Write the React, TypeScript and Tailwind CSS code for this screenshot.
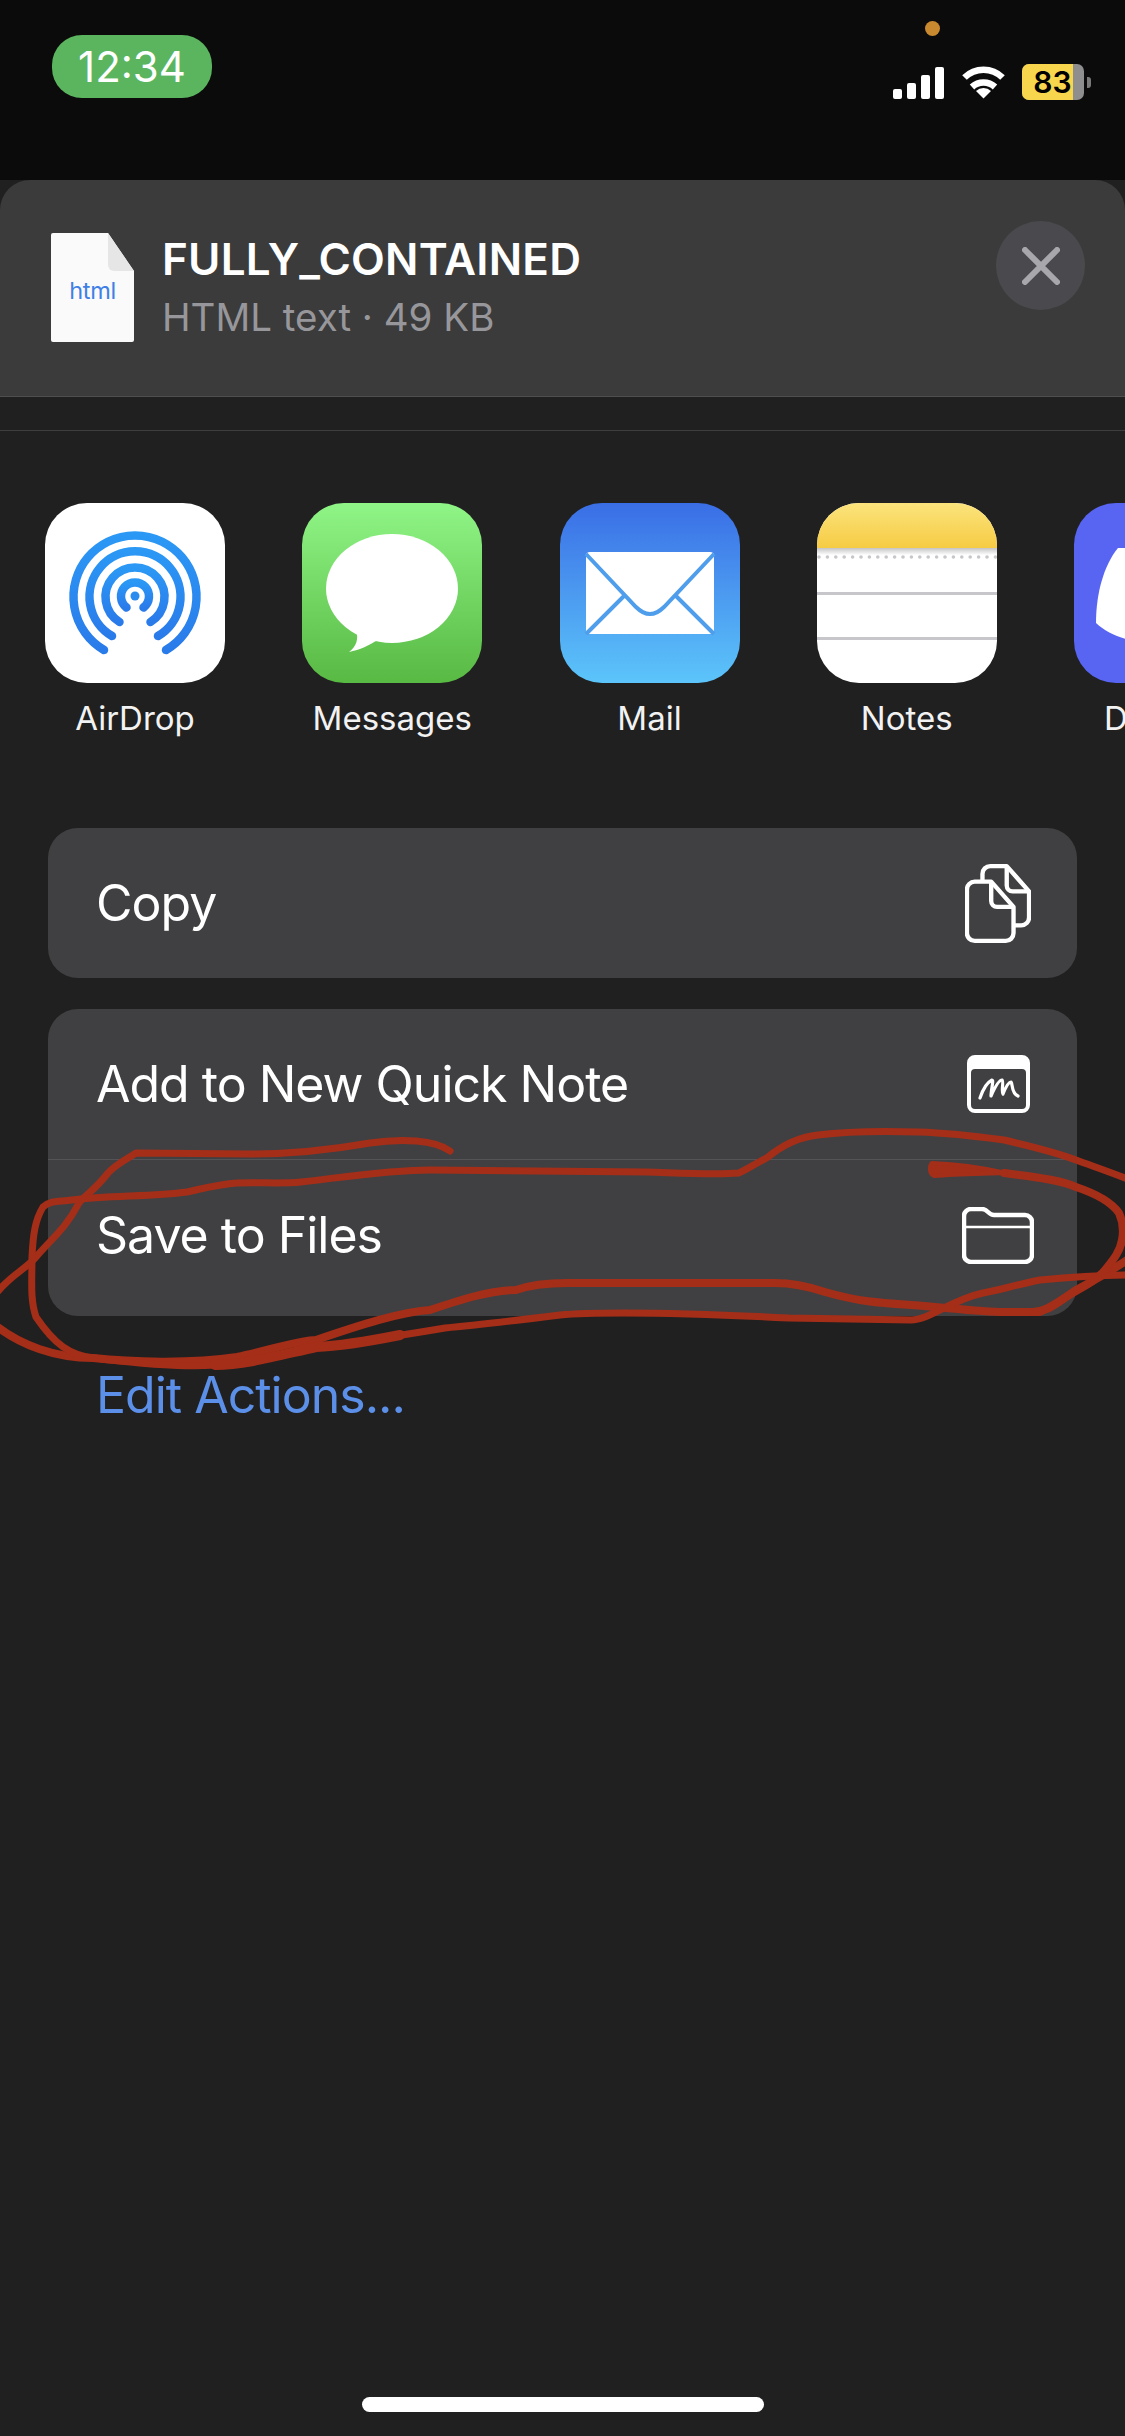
import React from 'react'

const font = { fontFamily: 'Inter, "Noto Sans", sans-serif' }

function StatusBar() {
  return (
    <div className="relative flex h-[180px] shrink-0 items-start justify-between bg-[#0b0b0b] pl-[52px] pr-[34px]">
      <div className="mt-[35px] flex h-[63px] w-[160px] items-center justify-center rounded-[30px] bg-[#5bb55f] text-[42px] text-white">12:34</div>
      <div className="absolute left-[925px] top-[21px] h-[15px] w-[15px] rounded-full bg-[#c98a2f]" />
      <div className="mt-[64px] flex items-center">
        <div className="mr-[17px] flex h-[34px] items-end gap-[5px]">
          <div className="h-[10px] w-[9px] rounded-[2px] bg-white" />
          <div className="h-[16px] w-[9px] rounded-[2px] bg-white" />
          <div className="h-[24px] w-[9px] rounded-[2px] bg-white" />
          <div className="h-[32px] w-[9px] rounded-[2px] bg-white" />
        </div>
        <svg width="45" height="34" viewBox="0 0 45 34" className="mr-[16px]">
          <path d="M3.5 12.5A27 27 0 0 1 41.500 12.500" fill="none" stroke="#fff" strokeWidth="6.500" />
          <path d="M11 22A17 17 0 0 1 34 22" fill="none" stroke="#fff" strokeWidth="6.500" />
          <path d="M22.500 33.500L15 26A11 11 0 0 1 30 26Z" fill="#fff" />
        </svg>
        <div className="relative flex h-[36px] w-[62px] overflow-hidden rounded-[7px] bg-[#8e8e8e]">
          <div className="flex h-full w-[51px] items-center justify-center bg-[#f7d54c] pl-[10px] text-[30px] font-semibold text-black">83</div>
        </div>
        <div className="ml-[3px] h-[11px] w-[4px] rounded-r-[3px] bg-[#7a7a7a]" />
      </div>
    </div>
  )
}

function FileIcon() {
  return (
    <div className="relative flex h-[109px] w-[83px] shrink-0 items-center justify-center pt-[6px]">
      <svg width="83" height="109" viewBox="0 0 83 109" className="absolute inset-0">
        <path d="M2 0H57L83 38V107a2 2 0 0 1-2 2H2a2 2 0 0 1-2-2V2a2 2 0 0 1 2-2Z" fill="#fafafa" />
        <path d="M57 0L83 38H63a6 6 0 0 1-6-6Z" fill="#e6e6e6" />
      </svg>
      <span className="relative text-[23.500px] tracking-[-0.3px] text-[#3f80e6]">html</span>
    </div>
  )
}

function SheetHeader() {
  return (
    <div className="flex h-[217px] shrink-0 items-start rounded-t-[30px] border-b border-[#4f4f4f] bg-[#3b3b3b] pl-[51px] pr-[40px]">
      <div className="mt-[53px]"><FileIcon /></div>
      <div className="ml-[28px] mt-[53px] flex-1">
        <div className="text-[44px] font-semibold leading-[52px] tracking-[0.2px] text-white">FULLY_CONTAINED</div>
        <div className="mt-[9px] text-[38.500px] leading-[46px] text-[#97979b]">HTML text · 49 KB</div>
      </div>
      <div className="mt-[41px] flex h-[89px] w-[89px] items-center justify-center rounded-full bg-[#4a4a4e]">
        <svg width="38" height="38" viewBox="0 0 38 38">
          <path d="M3 3L35 35M35 3L3 35" fill="none" stroke="#a8a8ac" strokeWidth="6" strokeLinecap="round" />
        </svg>
      </div>
    </div>
  )
}

function AirDropIcon() {
  return (
    <svg width="180" height="180" viewBox="0 0 180 180">
      <defs>
        <linearGradient id="air" x1="0" y1="0" x2="0" y2="1">
          <stop offset="0" stopColor="#2b98f5" />
          <stop offset="1" stopColor="#2a7bea" />
        </linearGradient>
      </defs>
      <rect width="180" height="180" fill="#fff" />
      <g fill="none" stroke="url(#air)" strokeWidth="8.500" strokeLinecap="round">
        <path d="M59 147A61.500 61.500 0 1 1 121 147" />
        <path d="M67 133A45.500 45.500 0 1 1 113 133" />
        <path d="M74.500 119A29.500 29.500 0 1 1 105.500 119" />
        <path d="M81.500 104.500A14 14 0 1 1 98.500 104.500" />
      </g>
      <circle cx="90" cy="93" r="4.500" fill="#2b8cf0" />
    </svg>
  )
}

function MessagesIcon() {
  return (
    <svg width="180" height="180" viewBox="0 0 180 180">
      <defs>
        <linearGradient id="msg" x1="0" y1="0" x2="0" y2="1">
          <stop offset="0" stopColor="#8ff586" />
          <stop offset="1" stopColor="#58b943" />
        </linearGradient>
      </defs>
      <rect width="180" height="180" fill="url(#msg)" />
      <ellipse cx="90" cy="85.500" rx="66" ry="54.500" fill="#fff" />
      <path d="M54 128C57 136 54 144 47 149C58 147 67 142 76 137Z" fill="#fff" />
    </svg>
  )
}

function MailIcon() {
  return (
    <svg width="180" height="180" viewBox="0 0 180 180">
      <defs>
        <linearGradient id="mail" x1="0" y1="0" x2="0" y2="1">
          <stop offset="0" stopColor="#3a6ee6" />
          <stop offset="1" stopColor="#5cc5fa" />
        </linearGradient>
      </defs>
      <rect width="180" height="180" fill="url(#mail)" />
      <rect x="26" y="49" width="128" height="82" rx="4" fill="#fff" />
      <g fill="none" stroke="#4f9eec" strokeWidth="4">
        <path d="M26 51L76 104Q90 118 104 104L154 51" />
        <path d="M26 131L65 92M154 131L115 92" />
      </g>
    </svg>
  )
}

function NotesIcon() {
  const dots = Array.from({ length: 22 }, (_, i) => i)
  return (
    <svg width="180" height="180" viewBox="0 0 180 180">
      <defs>
        <linearGradient id="note" x1="0" y1="0" x2="0" y2="1">
          <stop offset="0" stopColor="#fbe37c" />
          <stop offset="1" stopColor="#f6cc44" />
        </linearGradient>
        <linearGradient id="noteShade" x1="0" y1="0" x2="0" y2="1">
          <stop offset="0" stopColor="#c4c4c4" />
          <stop offset="1" stopColor="#fff" />
        </linearGradient>
      </defs>
      <rect width="180" height="180" fill="#fff" />
      <rect width="180" height="45" fill="url(#note)" />
      <rect y="45" width="180" height="7" fill="url(#noteShade)" />
      {dots.map((i) => <circle key={i} cx={2 + i * 8.400} cy="54" r="1.800" fill="#c6c6cb" />)}
      <rect y="89" width="180" height="3" fill="#c6c6cb" />
      <rect y="134" width="180" height="3" fill="#c6c6cb" />
    </svg>
  )
}

function DiscordIcon() {
  return (
    <svg width="180" height="180" viewBox="0 0 180 180">
      <rect width="180" height="180" fill="#5865f2" />
      <path d="M44 45C30 62 22 90 22 120C32 129 42 134 60 138L120 138V45Z" fill="#fff" />
    </svg>
  )
}

const apps = [
  { name: 'AirDrop', icon: <AirDropIcon /> },
  { name: 'Messages', icon: <MessagesIcon /> },
  { name: 'Mail', icon: <MailIcon /> },
  { name: 'Notes', icon: <NotesIcon /> },
  { name: 'Discord', icon: <DiscordIcon /> },
]

function AppRow() {
  return (
    <div className="mt-[72px] flex shrink-0 gap-[77.250px] overflow-hidden pl-[45px]">
      {apps.map((app) => (
        <div key={app.name} className="flex w-[180px] shrink-0 flex-col items-center">
          <div className="h-[180px] w-[180px] overflow-hidden rounded-[42px]">{app.icon}</div>
          <div className="mt-[15px] text-[33px] leading-[40px] text-[#f2f2f2]">{app.name}</div>
        </div>
      ))}
    </div>
  )
}

function CopyIcon() {
  return (
    <svg width="66" height="81" viewBox="0 0 68 83" fill="none" stroke="#fff" strokeWidth="4.500" strokeLinejoin="round">
      <path d="M18 18V11a8 8 0 0 1 8-8H43L66 29V56a8 8 0 0 1-8 8H50" />
      <path d="M43 3V23a6 6 0 0 0 6 6H66" />
      <path d="M10 19H27L50 45V72a8 8 0 0 1-8 8H10a8 8 0 0 1-8-8V27a8 8 0 0 1 8-8Z" />
      <path d="M27 19V39a6 6 0 0 0 6 6H50" />
    </svg>
  )
}

function QuickNoteIcon() {
  return (
    <svg width="63" height="58" viewBox="0 0 63 58">
      <path fillRule="evenodd" d="M8 0H55a8 8 0 0 1 8 8V50a8 8 0 0 1-8 8H8a8 8 0 0 1-8-8V8a8 8 0 0 1 8-8ZM8 14a4 4 0 0 0-4 4V50a4 4 0 0 0 4 4H55a4 4 0 0 0 4-4V18a4 4 0 0 0-4-4Z" fill="#fff" />
      <path d="M13 43C16 34 21 27 25 25C27 25 24 35 24 41C28 32 32 25 35 25C37 26 34 37 36 39C38 34 41 27 44 27C46 29 44 38 51 41" fill="none" stroke="#fff" strokeWidth="3.200" strokeLinecap="round" strokeLinejoin="round" />
    </svg>
  )
}

function FolderIcon() {
  return (
    <svg width="72" height="57" viewBox="0 0 72 57" fill="none" stroke="#fff" strokeWidth="4.500" strokeLinejoin="round">
      <path d="M2 9a7 7 0 0 1 7-7H20C26 2 26 8 32 8H63a7 7 0 0 1 7 7V48a7 7 0 0 1-7 7H9a7 7 0 0 1-7-7Z" />
      <path d="M2 20H70" strokeWidth="2.500" />
    </svg>
  )
}

function ActionRow({ label, icon, tall }: { label: string; icon: React.ReactNode; tall?: boolean }) {
  return (
    <div className={`flex items-center justify-between pl-[48px] pr-[43px] ${tall ? 'h-[156px] pb-[6px]' : 'h-[150px]'}`}>
      <span className="text-[50px] tracking-[-1px] text-white">{label}</span>
      <div className="flex w-[72px] justify-center">{icon}</div>
    </div>
  )
}

function Scribble() {
  return (
    <svg width="1125" height="400" viewBox="0 1000 1125 400" className="pointer-events-none absolute left-0 top-[1000px]" fill="none" stroke="#a52e18" strokeLinecap="round" strokeLinejoin="round">
      <path strokeWidth="7" d="M450 1151C435 1140 402 1138 370 1143C330 1150 290 1154 251 1154L136 1153C125 1160 115 1165 108 1173C95 1190 85 1195 79 1203C65 1230 50 1240 36 1257C25 1270 10 1275 -5 1295" />
      <path strokeWidth="8" d="M-5 1325C20 1345 55 1358 93 1358C130 1362 190 1364 237 1357C270 1350 300 1340 316 1340C360 1325 400 1312 430 1310C460 1300 490 1290 516 1290C530 1285 550 1283 567 1283L775 1283C795 1283 810 1287 825 1292C860 1302 880 1303 911 1305C950 1308 980 1312 1004 1312L1040 1312C1055 1305 1065 1298 1076 1290C1095 1280 1110 1272 1130 1258" />
      <path strokeWidth="7" d="M1130 1275C1090 1275 1060 1278 1040 1280C1015 1285 1000 1290 983 1293C950 1300 930 1320 911 1320L789 1318C730 1315 670 1313 624 1313C600 1313 580 1313 560 1315C520 1320 480 1325 445 1328C400 1335 350 1345 316 1347C280 1355 245 1365 215 1365C180 1368 130 1362 93 1358C70 1355 55 1345 36 1317C30 1300 32 1280 32 1257C33 1235 35 1220 43 1207C50 1200 60 1202 72 1200C110 1195 150 1197 187 1192C205 1188 220 1184 237 1183C260 1182 280 1184 301 1182C345 1177 390 1170 430 1170L646 1172C680 1173 715 1175 739 1173C750 1167 758 1163 768 1157C785 1143 800 1137 818 1135C850 1131 885 1131 918 1132C950 1133 975 1136 1004 1140C1030 1146 1055 1152 1076 1160C1095 1167 1110 1172 1130 1180" />
      <path strokeWidth="8" d="M1004 1173C1040 1178 1060 1180 1076 1187C1100 1195 1112 1203 1119 1213C1123 1222 1124 1230 1122 1240C1120 1252 1113 1260 1105 1270C1095 1283 1075 1290 1062 1300C1052 1307 1045 1311 1033 1312" />
      <path d="M932 1163C960 1164 985 1168 1006 1173C975 1174 955 1174 934 1176C929 1174 929 1166 932 1163Z" fill="#a52e18" strokeWidth="4" />
      <path strokeWidth="10" d="M400 1335C370 1341 340 1346 316 1347C280 1355 245 1365 215 1365" />
    </svg>
  )
}

export default function App() {
  return (
    <div className="relative flex h-[2436px] w-[1125px] flex-col overflow-hidden bg-[#202020]" style={font}>
      <StatusBar />
      <SheetHeader />
      <div className="mt-[33px] h-px shrink-0 bg-[#3e3e40]" />
      <AppRow />
      <div className="mx-[48px] mt-[90px] flex flex-col gap-[31px]">
        <div className="overflow-hidden rounded-[30px] bg-[#404042]">
          <ActionRow label="Copy" icon={<CopyIcon />} />
        </div>
        <div className="overflow-hidden rounded-[30px] bg-[#404042]">
          <ActionRow label="Add to New Quick Note" icon={<QuickNoteIcon />} />
          <div className="h-px bg-[#545456]" />
          <ActionRow label="Save to Files" icon={<FolderIcon />} tall />
        </div>
      </div>
      <div className="mt-[49px] pl-[96px] text-[50px] leading-[60px] tracking-[-1px] text-[#5b8fe8]">Edit Actions...</div>
      <div className="mx-auto mt-auto mb-[24px] h-[15px] w-[402px] rounded-full bg-white" />
      <Scribble />
    </div>
  )
}
